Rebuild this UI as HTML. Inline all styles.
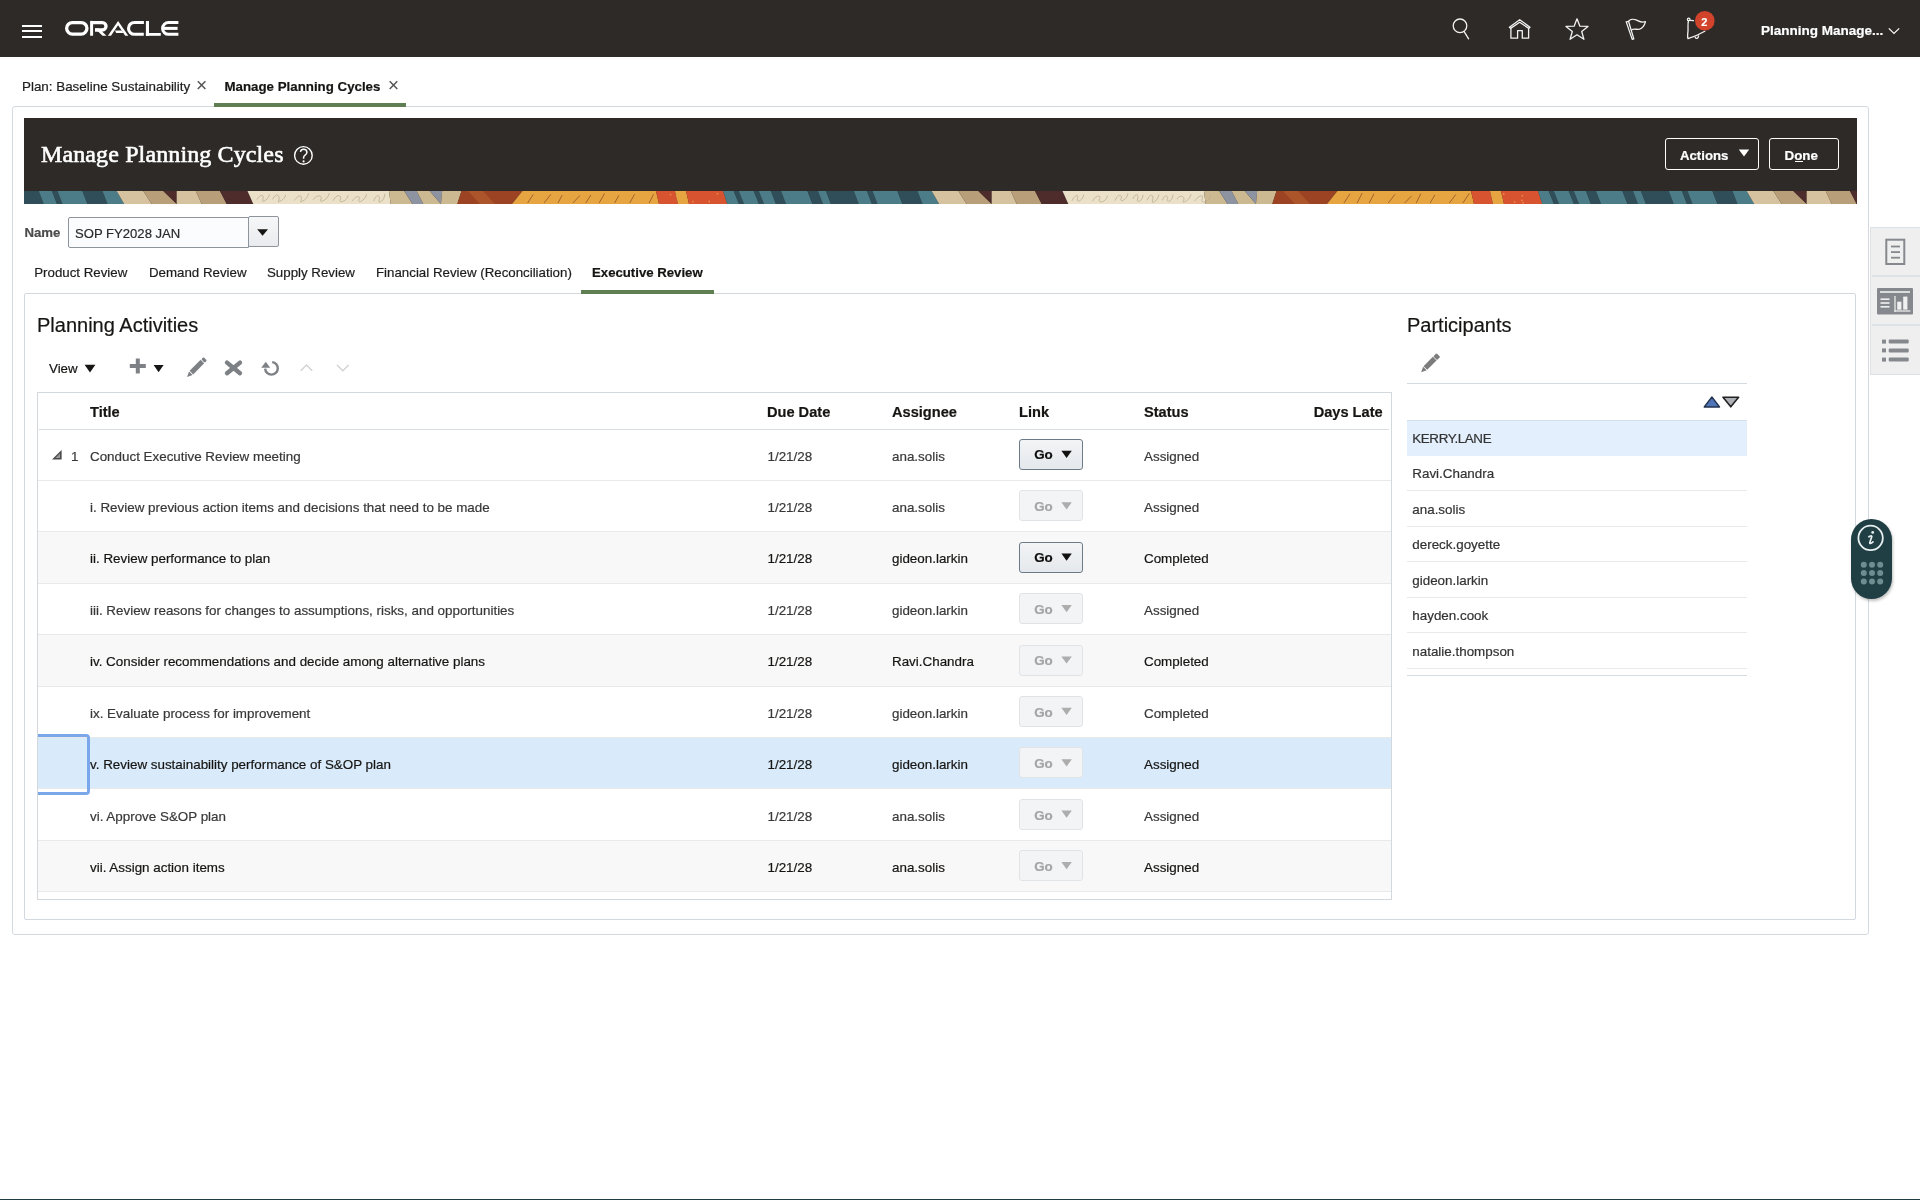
<!DOCTYPE html><html><head><meta charset="utf-8"><style>
*{margin:0;padding:0;box-sizing:border-box}
html,body{width:1920px;height:1200px;overflow:hidden;background:#fff;font-family:"Liberation Sans",sans-serif}
#root{position:absolute;left:0;top:0;width:1920px;height:1200px;will-change:transform}
.t{position:absolute;white-space:nowrap;line-height:1;-webkit-text-stroke-width:0.2px}
.a{position:absolute}
svg{position:absolute;left:0;top:0;overflow:visible}
</style></head><body><div id="root">
<div class="a" style="left:0px;top:0px;width:1920px;height:57px;background:#2e2a27"></div>
<div class="a" style="left:22px;top:24.5px;width:20px;height:2px;background:#fff"></div>
<div class="a" style="left:22px;top:30px;width:20px;height:2px;background:#fff"></div>
<div class="a" style="left:22px;top:35.5px;width:20px;height:2px;background:#fff"></div>
<svg width="1920" height="57" style="left:0;top:0">
<g fill="none" stroke="#fff" stroke-width="3.3">
<rect x="66.65" y="22.55" width="20.3" height="11.55" rx="5.78"/>
<path d="M91.6 22.55 H102.3 A3.72 3.72 0 0 1 102.3 30 H95"/>
</g>
<g fill="none" stroke="#fff" stroke-width="3.1">
<path d="M143.9 22.5 H134.4 A5.87 5.87 0 0 0 134.4 34.25 H143.8"/>
<path d="M178.4 22.5 H168.5 A5.88 5.88 0 0 0 168.5 34.3 H178.4"/>
</g>
<g fill="#fff">
<rect x="90.1" y="20.9" width="3" height="14.85"/>
<path d="M95 28.4 L98.9 28.4 L106.5 35.75 L102.5 35.75 Z"/>
<path fill-rule="evenodd" d="M118.1 20.9 L128.3 35.75 L107.9 35.75 Z M118.1 25.3 L125.2 35.75 L111.0 35.75 Z"/>
<path d="M115.0 30.5 L121.8 30.5 L123.4 32.9 L116.2 32.9 Z"/>
<rect x="145.9" y="21" width="3.1" height="14.8"/>
<rect x="145.9" y="33" width="14.9" height="2.8"/>
<rect x="163.8" y="26.85" width="13.8" height="3.05"/>
</g>
</svg>
<svg width="1920" height="57" style="left:0;top:0">
<g fill="none" stroke="#f2f2f2" stroke-width="1.3" stroke-linejoin="round" stroke-linecap="round">
<circle cx="1460" cy="25.8" r="6.8"/>
<path d="M1464 31.4 L1468.6 38.8"/>
<path d="M1509.4 27.2 L1519.7 19.7 L1530 27.2 L1528.8 28.4 L1519.7 22.3 L1510.6 28.4 Z"/>
<path d="M1510.9 28.6 V38.2 H1517.6 V30.6 H1522.3 V38.2 H1528.6 V28.6"/>
<path d="M1577 18.8 L1579.9 26.2 L1588 26.4 L1581.7 31.5 L1583.9 39.3 L1577 34.8 L1570.1 39.3 L1572.3 31.5 L1566 26.4 L1574.1 26.2 Z"/>
<path d="M1626.2 21.9 L1628.5 21.3 L1633.8 38.9 L1632.2 39.4 Z"/>
<path d="M1628.5 21.3 C1630 19.2 1633.5 18.9 1636 19.8 C1638.5 20.8 1641 23.2 1645.5 21.6 C1644.6 25 1643 28.2 1639.5 29.2 C1637 29.8 1634.2 28.3 1631.6 29.8"/>
<circle cx="1688.7" cy="19.4" r="1.3"/>
<path d="M1688.4 21 C1687.6 24 1688.2 28 1688 31 C1687.8 34 1687 36.5 1688 38.6 C1693 37 1700 34 1704.8 31.2"/>
<path d="M1695.2 37.2 C1696 39.2 1698.4 38.8 1698.6 35.8"/>
<path d="M1690 20.4 L1693.5 20.6"/>
</g>
<circle cx="1704.8" cy="20.7" r="9.8" fill="#d2432b"/>
</svg>
<div class="t" style="left:1701.3px;top:16.69px;font-size:11px;font-weight:700;color:#fff;font-family:'Liberation Sans';">2</div>
<div class="t" style="left:1761px;top:24.07px;font-size:13.5px;font-weight:700;color:#fff;font-family:'Liberation Sans';">Planning Manage...</div>
<svg width="1920" height="57"><path d="M1888.8 28.3 L1894 33.5 L1899.2 28.3" fill="none" stroke="#fff" stroke-width="1.2"/></svg>
<div class="t" style="left:22px;top:79.66px;font-size:13.4px;font-weight:400;color:#1d1d1d;font-family:'Liberation Sans';">Plan: Baseline Sustainability</div>
<div class="t" style="left:224.5px;top:79.74px;font-size:13.3px;font-weight:700;color:#161513;font-family:'Liberation Sans';">Manage Planning Cycles</div>
<svg width="1920" height="120"><g stroke="#555" stroke-width="1.5">
<path d="M197.8 81.3 L205.4 89 M205.4 81.3 L197.8 89"/>
<path d="M389.7 81.3 L397.3 89 M397.3 81.3 L389.7 89"/></g></svg>
<div class="a" style="left:12px;top:106px;width:1857px;height:829px;border:1px solid #d3d9df;border-radius:3px"></div>
<div class="a" style="left:214px;top:103px;width:192px;height:4px;background:#5f7e51"></div>
<div class="a" style="left:24px;top:118px;width:1833px;height:86px;background:#2e2a27"></div>
<div class="t" style="left:41px;top:141.90px;font-size:24px;font-weight:400;color:#fff;font-family:'Liberation Serif';letter-spacing:0.12px;-webkit-text-stroke:0.6px #fff">Manage Planning Cycles</div>
<svg width="1920" height="220"><circle cx="303.4" cy="155.4" r="8.8" fill="none" stroke="#fff" stroke-width="1.4"/><path d="M300.4 151.8 C300.8 150 302.2 149.3 303.6 149.3 C305.6 149.3 306.9 150.6 306.9 152.4 C306.9 154.6 303.7 155.4 303.6 157.4 V158.8" fill="none" stroke="#fff" stroke-width="1.5"/><circle cx="303.6" cy="161.4" r="1.05" fill="#fff"/></svg>
<div class="a" style="left:1665px;top:138px;width:94px;height:32px;border:1.6px solid #fff;border-radius:3px"></div>
<div class="t" style="left:1680px;top:148.83px;font-size:13.2px;font-weight:700;color:#fff;font-family:'Liberation Sans';">Actions</div>
<svg width="1920" height="220"><path d="M1738.8 149.4 H1749.2 L1744 156.6 Z" fill="#fff"/></svg>
<div class="a" style="left:1769px;top:138px;width:70px;height:32px;border:1.6px solid #fff;border-radius:3px"></div>
<div class="t" style="left:1784.5px;top:148.66px;font-size:13.4px;font-weight:700;color:#fff;font-family:'Liberation Sans';">Done</div>
<div class="a" style="left:1795px;top:161px;width:8px;height:1px;background:#fff"></div>
<svg width="1920" height="220"><defs><clipPath id="bc"><rect x="24" y="191" width="1833" height="13"/></clipPath></defs><g clip-path="url(#bc)"><path d="M-91.90 191 L-81.25 191 L-76.00 204 L-87.80 204Z" fill="#4b7c88"/><path d="M-81.25 191 L-76.25 191 L-71.00 204 L-76.00 204Z" fill="#2f4e59"/><path d="M-76.25 191 L-61.25 191 L-56.00 204 L-71.00 204Z" fill="#4b7c88"/><path d="M-61.25 191 L-56.25 191 L-51.00 204 L-56.00 204Z" fill="#2f4e59"/><path d="M-56.25 191 L-44.00 191 L-39.00 204 L-51.00 204Z" fill="#4b7c88"/><path d="M-44.00 191 L-34.00 191 L-29.00 204 L-39.00 204Z" fill="#2f4e59"/><path d="M-34.00 191 L-7.50 191 L-2.50 204 L-29.00 204Z" fill="#4b7c88"/><path d="M-7.50 191 L3.00 191 L8.00 204 L-2.50 204Z" fill="#2f4e59"/><path d="M3.00 191 L11.00 191 L16.00 204 L8.00 204Z" fill="#4b7c88"/><path d="M11.00 191 L38.75 191 L43.75 204 L16.00 204Z" fill="#2f4e59"/><path d="M38.75 191 L52.00 191 L57.00 204 L43.75 204Z" fill="#4b7c88"/><path d="M52.00 191 L57.50 191 L62.50 204 L57.00 204Z" fill="#2f4e59"/><path d="M57.50 191 L82.50 191 L87.50 204 L62.50 204Z" fill="#4b7c88"/><path d="M82.50 191 L102.50 191 L107.50 204 L87.50 204Z" fill="#2f4e59"/><path d="M102.50 191 L116.70 191 L124.20 204 L107.50 204Z" fill="#4b7c88"/><path d="M116.70 191 L143.30 191 L151.70 204 L124.20 204Z" fill="#d6c29e"/><path d="M143.30 191 L163.30 191 L176.70 204 L151.70 204Z" fill="#b89f7a"/><path d="M163.30 191 L176.70 191 L176.70 204 L176.70 204Z" fill="#4e2c2b"/><path d="M176.70 191 L195.80 191 L201.70 204 L176.70 204Z" fill="#d6c29e"/><path d="M195.80 191 L220.00 191 L226.70 204 L201.70 204Z" fill="#b89f7a"/><path d="M220.00 191 L247.50 191 L253.30 204 L226.70 204Z" fill="#4e2c2b"/><path d="M247.50 191 L389.00 191 L390.60 204 L253.30 204Z" fill="#ebe1c8"/><path d="M389.00 191 L404.20 191 L412.50 204 L390.60 204Z" fill="#cdb991"/><path d="M404.20 191 L416.70 191 L423.40 204 L412.50 204Z" fill="#8d93a0"/><path d="M416.70 191 L429.70 191 L441.00 204 L423.40 204Z" fill="#cdb991"/><path d="M429.70 191 L442.20 191 L441.00 204 L441.00 204Z" fill="#8d93a0"/><path d="M442.20 191 L461.50 191 L457.30 204 L441.00 204Z" fill="#cdb991"/><path d="M461.50 191 L522.50 191 L512.00 204 L457.30 204Z" fill="#9b4322"/><path d="M522.50 191 L656.00 191 L659.00 204 L512.00 204Z" fill="#e6a540"/><path d="M656.00 191 L675.00 191 L678.00 204 L659.00 204Z" fill="#d8532f"/><path d="M675.00 191 L686.00 191 L689.00 204 L678.00 204Z" fill="#e6a540"/><path d="M686.00 191 L723.10 191 L727.20 204 L689.00 204Z" fill="#d8532f"/><path d="M723.10 191 L733.75 191 L739.00 204 L727.20 204Z" fill="#4b7c88"/><path d="M733.75 191 L738.75 191 L744.00 204 L739.00 204Z" fill="#2f4e59"/><path d="M738.75 191 L753.75 191 L759.00 204 L744.00 204Z" fill="#4b7c88"/><path d="M753.75 191 L758.75 191 L764.00 204 L759.00 204Z" fill="#2f4e59"/><path d="M758.75 191 L771.00 191 L776.00 204 L764.00 204Z" fill="#4b7c88"/><path d="M771.00 191 L781.00 191 L786.00 204 L776.00 204Z" fill="#2f4e59"/><path d="M781.00 191 L807.50 191 L812.50 204 L786.00 204Z" fill="#4b7c88"/><path d="M807.50 191 L818.00 191 L823.00 204 L812.50 204Z" fill="#2f4e59"/><path d="M818.00 191 L826.00 191 L831.00 204 L823.00 204Z" fill="#4b7c88"/><path d="M826.00 191 L853.75 191 L858.75 204 L831.00 204Z" fill="#2f4e59"/><path d="M853.75 191 L867.00 191 L872.00 204 L858.75 204Z" fill="#4b7c88"/><path d="M867.00 191 L872.50 191 L877.50 204 L872.00 204Z" fill="#2f4e59"/><path d="M872.50 191 L897.50 191 L902.50 204 L877.50 204Z" fill="#4b7c88"/><path d="M897.50 191 L917.50 191 L922.50 204 L902.50 204Z" fill="#2f4e59"/><path d="M917.50 191 L931.70 191 L939.20 204 L922.50 204Z" fill="#4b7c88"/><path d="M931.70 191 L958.30 191 L966.70 204 L939.20 204Z" fill="#d6c29e"/><path d="M958.30 191 L978.30 191 L991.70 204 L966.70 204Z" fill="#b89f7a"/><path d="M978.30 191 L991.70 191 L991.70 204 L991.70 204Z" fill="#4e2c2b"/><path d="M991.70 191 L1010.80 191 L1016.70 204 L991.70 204Z" fill="#d6c29e"/><path d="M1010.80 191 L1035.00 191 L1041.70 204 L1016.70 204Z" fill="#b89f7a"/><path d="M1035.00 191 L1062.50 191 L1068.30 204 L1041.70 204Z" fill="#4e2c2b"/><path d="M1062.50 191 L1204.00 191 L1205.60 204 L1068.30 204Z" fill="#ebe1c8"/><path d="M1204.00 191 L1219.20 191 L1227.50 204 L1205.60 204Z" fill="#cdb991"/><path d="M1219.20 191 L1231.70 191 L1238.40 204 L1227.50 204Z" fill="#8d93a0"/><path d="M1231.70 191 L1244.70 191 L1256.00 204 L1238.40 204Z" fill="#cdb991"/><path d="M1244.70 191 L1257.20 191 L1256.00 204 L1256.00 204Z" fill="#8d93a0"/><path d="M1257.20 191 L1276.50 191 L1272.30 204 L1256.00 204Z" fill="#cdb991"/><path d="M1276.50 191 L1337.50 191 L1327.00 204 L1272.30 204Z" fill="#9b4322"/><path d="M1337.50 191 L1471.00 191 L1474.00 204 L1327.00 204Z" fill="#e6a540"/><path d="M1471.00 191 L1490.00 191 L1493.00 204 L1474.00 204Z" fill="#d8532f"/><path d="M1490.00 191 L1501.00 191 L1504.00 204 L1493.00 204Z" fill="#e6a540"/><path d="M1501.00 191 L1538.10 191 L1542.20 204 L1504.00 204Z" fill="#d8532f"/><path d="M1538.10 191 L1548.75 191 L1554.00 204 L1542.20 204Z" fill="#4b7c88"/><path d="M1548.75 191 L1553.75 191 L1559.00 204 L1554.00 204Z" fill="#2f4e59"/><path d="M1553.75 191 L1568.75 191 L1574.00 204 L1559.00 204Z" fill="#4b7c88"/><path d="M1568.75 191 L1573.75 191 L1579.00 204 L1574.00 204Z" fill="#2f4e59"/><path d="M1573.75 191 L1586.00 191 L1591.00 204 L1579.00 204Z" fill="#4b7c88"/><path d="M1586.00 191 L1596.00 191 L1601.00 204 L1591.00 204Z" fill="#2f4e59"/><path d="M1596.00 191 L1622.50 191 L1627.50 204 L1601.00 204Z" fill="#4b7c88"/><path d="M1622.50 191 L1633.00 191 L1638.00 204 L1627.50 204Z" fill="#2f4e59"/><path d="M1633.00 191 L1641.00 191 L1646.00 204 L1638.00 204Z" fill="#4b7c88"/><path d="M1641.00 191 L1668.75 191 L1673.75 204 L1646.00 204Z" fill="#2f4e59"/><path d="M1668.75 191 L1682.00 191 L1687.00 204 L1673.75 204Z" fill="#4b7c88"/><path d="M1682.00 191 L1687.50 191 L1692.50 204 L1687.00 204Z" fill="#2f4e59"/><path d="M1687.50 191 L1712.50 191 L1717.50 204 L1692.50 204Z" fill="#4b7c88"/><path d="M1712.50 191 L1732.50 191 L1737.50 204 L1717.50 204Z" fill="#2f4e59"/><path d="M1732.50 191 L1746.70 191 L1754.20 204 L1737.50 204Z" fill="#4b7c88"/><path d="M1746.70 191 L1773.30 191 L1781.70 204 L1754.20 204Z" fill="#d6c29e"/><path d="M1773.30 191 L1793.30 191 L1806.70 204 L1781.70 204Z" fill="#b89f7a"/><path d="M1793.30 191 L1806.70 191 L1806.70 204 L1806.70 204Z" fill="#4e2c2b"/><path d="M1806.70 191 L1825.80 191 L1831.70 204 L1806.70 204Z" fill="#d6c29e"/><path d="M1825.80 191 L1850.00 191 L1856.70 204 L1831.70 204Z" fill="#b89f7a"/><path d="M1850.00 191 L1877.50 191 L1883.30 204 L1856.70 204Z" fill="#4e2c2b"/><path d="M1877.50 191 L2019.00 191 L2020.60 204 L1883.30 204Z" fill="#ebe1c8"/><path d="M2019.00 191 L2034.20 191 L2042.50 204 L2020.60 204Z" fill="#cdb991"/><path d="M2034.20 191 L2046.70 191 L2053.40 204 L2042.50 204Z" fill="#8d93a0"/><path d="M2046.70 191 L2059.70 191 L2071.00 204 L2053.40 204Z" fill="#cdb991"/><path d="M2059.70 191 L2072.20 191 L2071.00 204 L2071.00 204Z" fill="#8d93a0"/><path d="M2072.20 191 L2091.50 191 L2087.30 204 L2071.00 204Z" fill="#cdb991"/><path d="M2091.50 191 L2152.50 191 L2142.00 204 L2087.30 204Z" fill="#9b4322"/><path d="M2152.50 191 L2286.00 191 L2289.00 204 L2142.00 204Z" fill="#e6a540"/><path d="M2286.00 191 L2305.00 191 L2308.00 204 L2289.00 204Z" fill="#d8532f"/><path d="M2305.00 191 L2316.00 191 L2319.00 204 L2308.00 204Z" fill="#e6a540"/><path d="M2316.00 191 L2353.10 191 L2357.20 204 L2319.00 204Z" fill="#d8532f"/></g><g clip-path="url(#bc)"><path d="M468 191 L483 191 L495 204 L480 204Z" fill="#b45c2f" opacity="0.7"/><path d="M257.0 199.6 C260.4 194.0 264.9 193.3 262.6 200.6 C261.5 202.7 268.3 200.2 269.4 194.5" fill="none" stroke="#b8aa8c" stroke-width="0.9" opacity="0.85"/><path d="M272.5 199.3 C276.1 192.3 280.9 194.7 278.5 201.5 C277.3 202.2 284.5 200.7 285.7 194.9" fill="none" stroke="#b8aa8c" stroke-width="0.9" opacity="0.85"/><path d="M294.2 200.6 C298.1 194.9 303.3 193.2 300.7 201.6 C299.4 202.6 307.3 200.4 308.6 193.4" fill="none" stroke="#b8aa8c" stroke-width="0.9" opacity="0.85"/><path d="M313.1 199.7 C317.5 193.7 323.4 195.6 320.5 200.1 C319.0 203.1 327.8 200.2 329.3 193.2" fill="none" stroke="#b8aa8c" stroke-width="0.9" opacity="0.85"/><path d="M333.1 200.7 C337.2 192.9 342.7 195.3 339.9 200.4 C338.6 202.6 346.8 202.4 348.2 195.1" fill="none" stroke="#b8aa8c" stroke-width="0.9" opacity="0.85"/><path d="M352.3 201.1 C356.2 194.6 361.4 195.9 358.8 199.9 C357.5 204.0 365.3 200.4 366.6 194.3" fill="none" stroke="#b8aa8c" stroke-width="0.9" opacity="0.85"/><path d="M373.8 201.0 C376.9 192.1 380.9 195.7 378.9 201.3 C377.9 203.1 383.9 202.6 384.9 193.9" fill="none" stroke="#b8aa8c" stroke-width="0.9" opacity="0.85"/><path d="M527.6 203 L533.3 194.4" fill="none" stroke="#94582a" stroke-width="1" opacity="0.85"/><path d="M544.0 203 L550.9 194.4" fill="none" stroke="#94582a" stroke-width="1" opacity="0.85"/><path d="M558.0 203 L562.2 195.1" fill="none" stroke="#94582a" stroke-width="1" opacity="0.85"/><path d="M572.9 203 L579.9 195.5" fill="none" stroke="#94582a" stroke-width="1" opacity="0.85"/><path d="M585.7 203 L590.9 195.0" fill="none" stroke="#94582a" stroke-width="1" opacity="0.85"/><path d="M599.1 203 L604.5 193.5" fill="none" stroke="#94582a" stroke-width="1" opacity="0.85"/><path d="M614.7 203 L618.9 195.3" fill="none" stroke="#94582a" stroke-width="1" opacity="0.85"/><path d="M629.8 203 L634.5 194.2" fill="none" stroke="#94582a" stroke-width="1" opacity="0.85"/><path d="M649.2 203 L653.5 194.3" fill="none" stroke="#94582a" stroke-width="1" opacity="0.85"/><circle cx="693.0" cy="201.7" r="0.9" fill="#f0a050" opacity="0.7"/><circle cx="709.2" cy="201.5" r="0.9" fill="#f0a050" opacity="0.7"/><circle cx="676.7" cy="196.6" r="0.9" fill="#f0a050" opacity="0.7"/><circle cx="681.5" cy="201.7" r="0.9" fill="#f0a050" opacity="0.7"/><circle cx="717.5" cy="193.7" r="0.9" fill="#f0a050" opacity="0.7"/><circle cx="670.6" cy="194.6" r="0.9" fill="#f0a050" opacity="0.7"/><path d="M1283 191 L1298 191 L1310 204 L1295 204Z" fill="#b45c2f" opacity="0.7"/><path d="M1072.0 200.9 C1075.2 193.8 1079.4 194.1 1077.3 199.0 C1076.3 202.8 1082.6 201.1 1083.7 194.7" fill="none" stroke="#b8aa8c" stroke-width="0.9" opacity="0.85"/><path d="M1092.4 201.1 C1096.5 193.9 1102.0 195.7 1099.3 199.2 C1097.9 203.8 1106.2 202.3 1107.6 195.6" fill="none" stroke="#b8aa8c" stroke-width="0.9" opacity="0.85"/><path d="M1115.0 200.6 C1118.5 192.3 1123.2 195.5 1120.8 199.2 C1119.7 202.1 1126.7 200.6 1127.9 193.5" fill="none" stroke="#b8aa8c" stroke-width="0.9" opacity="0.85"/><path d="M1132.8 199.0 C1135.6 192.5 1139.3 193.4 1137.4 200.1 C1136.5 202.1 1142.1 202.6 1143.1 194.8" fill="none" stroke="#b8aa8c" stroke-width="0.9" opacity="0.85"/><path d="M1147.0 200.4 C1150.2 193.1 1154.6 193.5 1152.4 201.5 C1151.3 204.0 1157.8 201.4 1158.9 194.5" fill="none" stroke="#b8aa8c" stroke-width="0.9" opacity="0.85"/><path d="M1162.3 200.4 C1165.2 192.8 1169.1 196.3 1167.2 199.5 C1166.2 202.0 1172.0 202.9 1173.0 194.6" fill="none" stroke="#b8aa8c" stroke-width="0.9" opacity="0.85"/><path d="M1176.9 199.1 C1180.7 193.6 1185.9 196.9 1183.3 201.6 C1182.0 203.4 1189.7 200.8 1191.0 194.1" fill="none" stroke="#b8aa8c" stroke-width="0.9" opacity="0.85"/><path d="M1194.7 201.1 C1199.0 194.3 1204.8 194.3 1201.9 199.7 C1200.5 203.6 1209.1 203.0 1210.5 195.6" fill="none" stroke="#b8aa8c" stroke-width="0.9" opacity="0.85"/><path d="M1343.9 203 L1350.1 193.7" fill="none" stroke="#94582a" stroke-width="1" opacity="0.85"/><path d="M1357.1 203 L1362.2 193.1" fill="none" stroke="#94582a" stroke-width="1" opacity="0.85"/><path d="M1369.2 203 L1374.0 193.8" fill="none" stroke="#94582a" stroke-width="1" opacity="0.85"/><path d="M1388.2 203 L1395.0 194.3" fill="none" stroke="#94582a" stroke-width="1" opacity="0.85"/><path d="M1404.6 203 L1411.6 195.9" fill="none" stroke="#94582a" stroke-width="1" opacity="0.85"/><path d="M1416.2 203 L1420.8 193.7" fill="none" stroke="#94582a" stroke-width="1" opacity="0.85"/><path d="M1430.2 203 L1434.8 194.9" fill="none" stroke="#94582a" stroke-width="1" opacity="0.85"/><path d="M1449.4 203 L1455.9 194.4" fill="none" stroke="#94582a" stroke-width="1" opacity="0.85"/><path d="M1462.9 203 L1469.3 193.3" fill="none" stroke="#94582a" stroke-width="1" opacity="0.85"/><circle cx="1514.6" cy="202.0" r="0.9" fill="#f0a050" opacity="0.7"/><circle cx="1521.9" cy="200.3" r="0.9" fill="#f0a050" opacity="0.7"/><circle cx="1503.7" cy="194.0" r="0.9" fill="#f0a050" opacity="0.7"/><circle cx="1522.3" cy="195.7" r="0.9" fill="#f0a050" opacity="0.7"/><circle cx="1523.0" cy="202.7" r="0.9" fill="#f0a050" opacity="0.7"/><circle cx="1498.8" cy="196.4" r="0.9" fill="#f0a050" opacity="0.7"/><path d="M2098 191 L2113 191 L2125 204 L2110 204Z" fill="#b45c2f" opacity="0.7"/><path d="M1887.0 201.9 C1891.7 192.5 1897.9 193.5 1894.8 199.5 C1893.3 203.8 1902.6 202.4 1904.2 193.4" fill="none" stroke="#b8aa8c" stroke-width="0.9" opacity="0.85"/><path d="M1911.6 201.6 C1916.3 193.1 1922.7 195.2 1919.5 199.4 C1917.9 202.0 1927.4 202.9 1929.0 194.9" fill="none" stroke="#b8aa8c" stroke-width="0.9" opacity="0.85"/><path d="M1934.6 200.7 C1939.3 194.6 1945.5 196.3 1942.4 199.6 C1940.8 202.5 1950.1 200.9 1951.7 193.7" fill="none" stroke="#b8aa8c" stroke-width="0.9" opacity="0.85"/><path d="M1957.7 200.7 C1960.9 192.4 1965.2 196.6 1963.1 200.1 C1962.0 202.9 1968.5 201.8 1969.6 195.7" fill="none" stroke="#b8aa8c" stroke-width="0.9" opacity="0.85"/><path d="M1975.0 201.0 C1979.6 193.6 1985.8 195.1 1982.7 199.1 C1981.2 202.9 1990.4 200.5 1992.0 193.0" fill="none" stroke="#b8aa8c" stroke-width="0.9" opacity="0.85"/><path d="M1999.2 200.9 C2002.3 194.2 2006.4 195.2 2004.3 200.0 C2003.3 203.0 2009.4 201.7 2010.4 195.4" fill="none" stroke="#b8aa8c" stroke-width="0.9" opacity="0.85"/><path d="M2157.4 203 L2162.1 193.8" fill="none" stroke="#94582a" stroke-width="1" opacity="0.85"/><path d="M2173.6 203 L2179.2 194.7" fill="none" stroke="#94582a" stroke-width="1" opacity="0.85"/><path d="M2188.6 203 L2195.3 194.3" fill="none" stroke="#94582a" stroke-width="1" opacity="0.85"/><path d="M2202.7 203 L2208.2 194.5" fill="none" stroke="#94582a" stroke-width="1" opacity="0.85"/><path d="M2218.2 203 L2223.5 194.6" fill="none" stroke="#94582a" stroke-width="1" opacity="0.85"/><path d="M2231.9 203 L2238.7 195.1" fill="none" stroke="#94582a" stroke-width="1" opacity="0.85"/><path d="M2249.3 203 L2256.1 193.8" fill="none" stroke="#94582a" stroke-width="1" opacity="0.85"/><path d="M2262.4 203 L2269.2 195.5" fill="none" stroke="#94582a" stroke-width="1" opacity="0.85"/><path d="M2274.8 203 L2279.2 194.3" fill="none" stroke="#94582a" stroke-width="1" opacity="0.85"/><circle cx="2294.4" cy="194.6" r="0.9" fill="#f0a050" opacity="0.7"/><circle cx="2294.4" cy="199.4" r="0.9" fill="#f0a050" opacity="0.7"/><circle cx="2337.0" cy="201.9" r="0.9" fill="#f0a050" opacity="0.7"/><circle cx="2299.3" cy="199.9" r="0.9" fill="#f0a050" opacity="0.7"/><circle cx="2329.6" cy="193.6" r="0.9" fill="#f0a050" opacity="0.7"/><circle cx="2343.0" cy="202.6" r="0.9" fill="#f0a050" opacity="0.7"/></g></svg>
<div class="t" style="left:24.5px;top:226.03px;font-size:13.2px;font-weight:700;color:#4b4b4b;font-family:'Liberation Sans';">Name</div>
<div class="a" style="left:68px;top:217px;width:181px;height:31px;border:1px solid #8d949c;border-radius:2px 0 0 2px;background:#fbfcfd"></div>
<div class="t" style="left:75px;top:226.71px;font-size:13.1px;font-weight:400;color:#2a2a2a;font-family:'Liberation Sans';">SOP FY2028 JAN</div>
<div class="a" style="left:247.5px;top:215.5px;width:31px;height:31px;border:1px solid #8d949c;border-radius:2px;background:linear-gradient(#f6f7f8,#e9ebee)"></div>
<svg width="1920" height="300"><path d="M257.2 229.2 H268 L262.6 235.8 Z" fill="#161513"/></svg>
<div class="t" style="left:34.2px;top:265.74px;font-size:13.3px;font-weight:400;color:#1d1d1d;font-family:'Liberation Sans';">Product Review</div>
<div class="t" style="left:149px;top:265.74px;font-size:13.3px;font-weight:400;color:#1d1d1d;font-family:'Liberation Sans';">Demand Review</div>
<div class="t" style="left:267px;top:265.74px;font-size:13.3px;font-weight:400;color:#1d1d1d;font-family:'Liberation Sans';">Supply Review</div>
<div class="t" style="left:376px;top:265.74px;font-size:13.3px;font-weight:400;color:#1d1d1d;font-family:'Liberation Sans';">Financial Review (Reconciliation)</div>
<div class="t" style="left:592px;top:265.83px;font-size:13.2px;font-weight:700;color:#161513;font-family:'Liberation Sans';">Executive Review</div>
<div class="a" style="left:24px;top:293px;width:1832px;height:627px;border:1px solid #d3d9df;border-radius:2px"></div>
<div class="a" style="left:581px;top:289.5px;width:133px;height:4px;background:#5f7e51"></div>
<div class="t" style="left:37px;top:315.07px;font-size:20px;font-weight:400;color:#161513;font-family:'Liberation Sans';">Planning Activities</div>
<div class="t" style="left:49px;top:361.54px;font-size:13.3px;font-weight:400;color:#161513;font-family:'Liberation Sans';">View</div>
<svg width="1920" height="400"><g fill="#161513">
<path d="M84.6 364.8 H95.4 L90 372.4 Z"/><path d="M153.6 365 H163.6 L158.6 372.2 Z"/></g>
<g fill="#7d8084">
<path d="M135.8 358.6 H139.8 V364.1 H145.8 V368.1 H139.8 V373.6 H135.8 V368.1 H129.8 V364.1 H135.8 Z"/>
<g transform="translate(187,377) rotate(-45)"><path d="M0 0 L5.4 -2.5 L5.4 2.5 Z"/><rect x="6.2" y="-2.5" width="15.6" height="5"/><rect x="22.6" y="-2.5" width="3.2" height="5" rx="1.2"/></g>
</g>
<g stroke="#7d8084" stroke-width="4.4" stroke-linecap="round" fill="none">
<path d="M227 362.6 L240 373.2 M240 362.6 L227 373.2"/>
</g>
<g stroke="#7d8084" stroke-width="2.4" fill="none">
<path d="M272.2 362.1 A6.3 6.3 0 1 1 265.2 368.6"/>
</g>
<path d="M261.2 367.8 L270.2 367.8 L265.8 361.8 Z" fill="#7d8084"/>
<g stroke="#d2d2d2" stroke-width="1.4" fill="none">
<path d="M300.8 370.8 L306.5 365 L312.2 370.8"/>
<path d="M337 365 L342.8 370.8 L348.6 365"/>
</g></svg>
<div class="a" style="left:37px;top:392px;width:1355px;height:508px;border:1px solid #d3d8dd"></div>
<div class="a" style="left:38.5px;top:429px;width:1350px;height:1px;background:#d8dde3"></div>
<div class="t" style="left:90px;top:404.64px;font-size:14.6px;font-weight:700;color:#161513;font-family:'Liberation Sans';">Title</div>
<div class="t" style="left:767px;top:404.64px;font-size:14.6px;font-weight:700;color:#161513;font-family:'Liberation Sans';">Due Date</div>
<div class="t" style="left:892px;top:404.64px;font-size:14.6px;font-weight:700;color:#161513;font-family:'Liberation Sans';">Assignee</div>
<div class="t" style="left:1019px;top:404.64px;font-size:14.6px;font-weight:700;color:#161513;font-family:'Liberation Sans';">Link</div>
<div class="t" style="left:1144px;top:404.64px;font-size:14.6px;font-weight:700;color:#161513;font-family:'Liberation Sans';">Status</div>
<div class="t" style="right:537.4000000000001px;top:404.64px;font-size:14.6px;font-weight:700;color:#161513">Days Late</div>
<div class="a" style="left:38px;top:480px;width:1353px;height:1px;background:#e9e9e9"></div>
<div class="t" style="left:90px;top:449.56px;font-size:13.4px;font-weight:400;color:#383838;font-family:'Liberation Sans';">Conduct Executive Review meeting</div>
<div class="t" style="left:767.5px;top:449.56px;font-size:13.4px;font-weight:400;color:#383838;font-family:'Liberation Sans';">1/21/28</div>
<div class="t" style="left:892px;top:449.56px;font-size:13.4px;font-weight:400;color:#383838;font-family:'Liberation Sans';">ana.solis</div>
<div class="t" style="left:1144px;top:449.56px;font-size:13.4px;font-weight:400;color:#383838;font-family:'Liberation Sans';">Assigned</div>
<div class="a" style="left:1019px;top:439px;width:64px;height:31px;border:1.4px solid #6d7b89;border-radius:3px;background:linear-gradient(#f2f4f6,#e5e8ec)"></div>
<div class="t" style="left:1034.2px;top:448.46px;font-size:13.4px;font-weight:700;color:#0d0d0d;font-family:'Liberation Sans';">Go</div>
<svg width="1920" height="1000"><path d="M1061.4 450.8 H1071.8 L1066.6 458.0 Z" fill="#111"/></svg>
<svg width="1920" height="1000"><path d="M52 459.6 L61.6 450 V459.6 Z" fill="#4a4a4a"/><path d="M55.5 458 L60 453.5 V458 Z" fill="#9a9a9a"/></svg>
<div class="t" style="left:71px;top:449.56px;font-size:13.4px;font-weight:400;color:#383838;font-family:'Liberation Sans';">1</div>
<div class="a" style="left:38px;top:531px;width:1353px;height:1px;background:#e9e9e9"></div>
<div class="t" style="left:90px;top:501.01px;font-size:13.4px;font-weight:400;color:#383838;font-family:'Liberation Sans';">i. Review previous action items and decisions that need to be made</div>
<div class="t" style="left:767.5px;top:501.01px;font-size:13.4px;font-weight:400;color:#383838;font-family:'Liberation Sans';">1/21/28</div>
<div class="t" style="left:892px;top:501.01px;font-size:13.4px;font-weight:400;color:#383838;font-family:'Liberation Sans';">ana.solis</div>
<div class="t" style="left:1144px;top:501.01px;font-size:13.4px;font-weight:400;color:#383838;font-family:'Liberation Sans';">Assigned</div>
<div class="a" style="left:1019px;top:490px;width:64px;height:31px;border:1px solid #e1e4e7;border-radius:3px;background:#f2f4f6"></div>
<div class="t" style="left:1034.2px;top:499.91px;font-size:13.4px;font-weight:700;color:#a4a4a4;font-family:'Liberation Sans';">Go</div>
<svg width="1920" height="1000"><path d="M1061.4 502.2 H1071.8 L1066.6 509.4 Z" fill="#adadad"/></svg>
<div class="a" style="left:38px;top:532px;width:1353px;height:51px;background:#f8f8f8"></div>
<div class="a" style="left:38px;top:583px;width:1353px;height:1px;background:#e9e9e9"></div>
<div class="t" style="left:90px;top:552.46px;font-size:13.4px;font-weight:400;color:#161513;font-family:'Liberation Sans';">ii. Review performance to plan</div>
<div class="t" style="left:767.5px;top:552.46px;font-size:13.4px;font-weight:400;color:#161513;font-family:'Liberation Sans';">1/21/28</div>
<div class="t" style="left:892px;top:552.46px;font-size:13.4px;font-weight:400;color:#161513;font-family:'Liberation Sans';">gideon.larkin</div>
<div class="t" style="left:1144px;top:552.46px;font-size:13.4px;font-weight:400;color:#161513;font-family:'Liberation Sans';">Completed</div>
<div class="a" style="left:1019px;top:542px;width:64px;height:31px;border:1.4px solid #6d7b89;border-radius:3px;background:linear-gradient(#f2f4f6,#e5e8ec)"></div>
<div class="t" style="left:1034.2px;top:551.36px;font-size:13.4px;font-weight:700;color:#0d0d0d;font-family:'Liberation Sans';">Go</div>
<svg width="1920" height="1000"><path d="M1061.4 553.5999999999999 H1071.8 L1066.6 560.8 Z" fill="#111"/></svg>
<div class="a" style="left:38px;top:634px;width:1353px;height:1px;background:#e9e9e9"></div>
<div class="t" style="left:90px;top:603.91px;font-size:13.4px;font-weight:400;color:#383838;font-family:'Liberation Sans';">iii. Review reasons for changes to assumptions, risks, and opportunities</div>
<div class="t" style="left:767.5px;top:603.91px;font-size:13.4px;font-weight:400;color:#383838;font-family:'Liberation Sans';">1/21/28</div>
<div class="t" style="left:892px;top:603.91px;font-size:13.4px;font-weight:400;color:#383838;font-family:'Liberation Sans';">gideon.larkin</div>
<div class="t" style="left:1144px;top:603.91px;font-size:13.4px;font-weight:400;color:#383838;font-family:'Liberation Sans';">Assigned</div>
<div class="a" style="left:1019px;top:593px;width:64px;height:31px;border:1px solid #e1e4e7;border-radius:3px;background:#f2f4f6"></div>
<div class="t" style="left:1034.2px;top:602.81px;font-size:13.4px;font-weight:700;color:#a4a4a4;font-family:'Liberation Sans';">Go</div>
<svg width="1920" height="1000"><path d="M1061.4 605.0 H1071.8 L1066.6 612.2 Z" fill="#adadad"/></svg>
<div class="a" style="left:38px;top:635px;width:1353px;height:51px;background:#f8f8f8"></div>
<div class="a" style="left:38px;top:686px;width:1353px;height:1px;background:#e9e9e9"></div>
<div class="t" style="left:90px;top:655.36px;font-size:13.4px;font-weight:400;color:#161513;font-family:'Liberation Sans';">iv. Consider recommendations and decide among alternative plans</div>
<div class="t" style="left:767.5px;top:655.36px;font-size:13.4px;font-weight:400;color:#161513;font-family:'Liberation Sans';">1/21/28</div>
<div class="t" style="left:892px;top:655.36px;font-size:13.4px;font-weight:400;color:#161513;font-family:'Liberation Sans';">Ravi.Chandra</div>
<div class="t" style="left:1144px;top:655.36px;font-size:13.4px;font-weight:400;color:#161513;font-family:'Liberation Sans';">Completed</div>
<div class="a" style="left:1019px;top:645px;width:64px;height:31px;border:1px solid #e1e4e7;border-radius:3px;background:#f2f4f6"></div>
<div class="t" style="left:1034.2px;top:654.26px;font-size:13.4px;font-weight:700;color:#a4a4a4;font-family:'Liberation Sans';">Go</div>
<svg width="1920" height="1000"><path d="M1061.4 656.4 H1071.8 L1066.6 663.6 Z" fill="#adadad"/></svg>
<div class="a" style="left:38px;top:737px;width:1353px;height:1px;background:#e9e9e9"></div>
<div class="t" style="left:90px;top:706.81px;font-size:13.4px;font-weight:400;color:#383838;font-family:'Liberation Sans';">ix. Evaluate process for improvement</div>
<div class="t" style="left:767.5px;top:706.81px;font-size:13.4px;font-weight:400;color:#383838;font-family:'Liberation Sans';">1/21/28</div>
<div class="t" style="left:892px;top:706.81px;font-size:13.4px;font-weight:400;color:#383838;font-family:'Liberation Sans';">gideon.larkin</div>
<div class="t" style="left:1144px;top:706.81px;font-size:13.4px;font-weight:400;color:#383838;font-family:'Liberation Sans';">Completed</div>
<div class="a" style="left:1019px;top:696px;width:64px;height:31px;border:1px solid #e1e4e7;border-radius:3px;background:#f2f4f6"></div>
<div class="t" style="left:1034.2px;top:705.71px;font-size:13.4px;font-weight:700;color:#a4a4a4;font-family:'Liberation Sans';">Go</div>
<svg width="1920" height="1000"><path d="M1061.4 707.8 H1071.8 L1066.6 715.0 Z" fill="#adadad"/></svg>
<div class="a" style="left:38px;top:738px;width:1353px;height:50px;background:#d9ebfb"></div>
<div class="a" style="left:38px;top:788px;width:1353px;height:1px;background:#e9e9e9"></div>
<div class="t" style="left:90px;top:758.26px;font-size:13.4px;font-weight:400;color:#161513;font-family:'Liberation Sans';">v. Review sustainability performance of S&amp;OP plan</div>
<div class="t" style="left:767.5px;top:758.26px;font-size:13.4px;font-weight:400;color:#161513;font-family:'Liberation Sans';">1/21/28</div>
<div class="t" style="left:892px;top:758.26px;font-size:13.4px;font-weight:400;color:#161513;font-family:'Liberation Sans';">gideon.larkin</div>
<div class="t" style="left:1144px;top:758.26px;font-size:13.4px;font-weight:400;color:#161513;font-family:'Liberation Sans';">Assigned</div>
<div class="a" style="left:1019px;top:747px;width:64px;height:31px;border:1px solid #e1e4e7;border-radius:3px;background:#f2f4f6"></div>
<div class="t" style="left:1034.2px;top:757.16px;font-size:13.4px;font-weight:700;color:#a4a4a4;font-family:'Liberation Sans';">Go</div>
<svg width="1920" height="1000"><path d="M1061.4 759.1999999999999 H1071.8 L1066.6 766.4 Z" fill="#adadad"/></svg>
<div class="a" style="left:38px;top:840px;width:1353px;height:1px;background:#e9e9e9"></div>
<div class="t" style="left:90px;top:809.71px;font-size:13.4px;font-weight:400;color:#383838;font-family:'Liberation Sans';">vi. Approve S&amp;OP plan</div>
<div class="t" style="left:767.5px;top:809.71px;font-size:13.4px;font-weight:400;color:#383838;font-family:'Liberation Sans';">1/21/28</div>
<div class="t" style="left:892px;top:809.71px;font-size:13.4px;font-weight:400;color:#383838;font-family:'Liberation Sans';">ana.solis</div>
<div class="t" style="left:1144px;top:809.71px;font-size:13.4px;font-weight:400;color:#383838;font-family:'Liberation Sans';">Assigned</div>
<div class="a" style="left:1019px;top:799px;width:64px;height:31px;border:1px solid #e1e4e7;border-radius:3px;background:#f2f4f6"></div>
<div class="t" style="left:1034.2px;top:808.61px;font-size:13.4px;font-weight:700;color:#a4a4a4;font-family:'Liberation Sans';">Go</div>
<svg width="1920" height="1000"><path d="M1061.4 810.5999999999999 H1071.8 L1066.6 817.8 Z" fill="#adadad"/></svg>
<div class="a" style="left:38px;top:841px;width:1353px;height:50px;background:#f8f8f8"></div>
<div class="a" style="left:38px;top:891px;width:1353px;height:1px;background:#e9e9e9"></div>
<div class="t" style="left:90px;top:861.16px;font-size:13.4px;font-weight:400;color:#161513;font-family:'Liberation Sans';">vii. Assign action items</div>
<div class="t" style="left:767.5px;top:861.16px;font-size:13.4px;font-weight:400;color:#161513;font-family:'Liberation Sans';">1/21/28</div>
<div class="t" style="left:892px;top:861.16px;font-size:13.4px;font-weight:400;color:#161513;font-family:'Liberation Sans';">ana.solis</div>
<div class="t" style="left:1144px;top:861.16px;font-size:13.4px;font-weight:400;color:#161513;font-family:'Liberation Sans';">Assigned</div>
<div class="a" style="left:1019px;top:850px;width:64px;height:31px;border:1px solid #e1e4e7;border-radius:3px;background:#f2f4f6"></div>
<div class="t" style="left:1034.2px;top:860.06px;font-size:13.4px;font-weight:700;color:#a4a4a4;font-family:'Liberation Sans';">Go</div>
<svg width="1920" height="1000"><path d="M1061.4 862.0 H1071.8 L1066.6 869.2 Z" fill="#adadad"/></svg>
<div class="a" style="left:37.5px;top:734px;width:52px;height:60.5px;border:3px solid #7aa6ea;border-left:none;border-radius:0 4px 4px 0"></div>
<div class="t" style="left:1407px;top:314.67px;font-size:20px;font-weight:400;color:#161513;font-family:'Liberation Sans';">Participants</div>
<svg width="1920" height="400"><g fill="#7c7c7c" transform="translate(1421.2,372.2) rotate(-45)"><path d="M0 0 L5.2 -2.6 L5.2 2.6 Z"/><rect x="5.9" y="-2.6" width="13.2" height="5.2"/><rect x="19.8" y="-2.6" width="4.4" height="5.2" rx="0.8"/></g></svg>
<div class="a" style="left:1407px;top:383px;width:340px;height:1.2px;background:#d3dae1"></div>
<svg width="1920" height="420">
<path d="M1704.2 407 L1711.9 397 L1719.6 407 Z" fill="#4f74b8" stroke="#22324d" stroke-width="1.3" stroke-linejoin="round"/>
<path d="M1723 397.2 H1738.6 L1730.8 406.8 Z" fill="#adb0b5" stroke="#222" stroke-width="1.6" stroke-linejoin="round"/>
</svg>
<div class="a" style="left:1407px;top:419.5px;width:340px;height:36px;background:#e3effc;border-top:1px solid #d2dfec"></div>
<div class="t" style="left:1412.3px;top:431.66px;font-size:13.4px;font-weight:400;color:#333;font-family:'Liberation Sans';letter-spacing:-0.4px">KERRY.LANE</div>
<div class="t" style="left:1412.3px;top:467.16px;font-size:13.4px;font-weight:400;color:#333;font-family:'Liberation Sans';">Ravi.Chandra</div>
<div class="a" style="left:1407px;top:490px;width:340px;height:1px;background:#e9e9e9"></div>
<div class="t" style="left:1412.3px;top:502.66px;font-size:13.4px;font-weight:400;color:#333;font-family:'Liberation Sans';">ana.solis</div>
<div class="a" style="left:1407px;top:526px;width:340px;height:1px;background:#e9e9e9"></div>
<div class="t" style="left:1412.3px;top:538.16px;font-size:13.4px;font-weight:400;color:#333;font-family:'Liberation Sans';">dereck.goyette</div>
<div class="a" style="left:1407px;top:561px;width:340px;height:1px;background:#e9e9e9"></div>
<div class="t" style="left:1412.3px;top:573.66px;font-size:13.4px;font-weight:400;color:#333;font-family:'Liberation Sans';">gideon.larkin</div>
<div class="a" style="left:1407px;top:597px;width:340px;height:1px;background:#e9e9e9"></div>
<div class="t" style="left:1412.3px;top:609.16px;font-size:13.4px;font-weight:400;color:#333;font-family:'Liberation Sans';">hayden.cook</div>
<div class="a" style="left:1407px;top:632px;width:340px;height:1px;background:#e9e9e9"></div>
<div class="t" style="left:1412.3px;top:644.66px;font-size:13.4px;font-weight:400;color:#333;font-family:'Liberation Sans';">natalie.thompson</div>
<div class="a" style="left:1407px;top:668px;width:340px;height:1px;background:#e9e9e9"></div>
<div class="a" style="left:1407px;top:675px;width:340px;height:1.3px;background:#d3dae1"></div>
<div class="a" style="left:1870px;top:227px;width:50px;height:148px;background:#efefef;border:1.5px solid #dde2e7;border-right:none"></div>
<div class="a" style="left:1871.5px;top:274.5px;width:48.5px;height:2px;background:#dde2e7"></div>
<div class="a" style="left:1871.5px;top:324px;width:48.5px;height:2px;background:#dde2e7"></div>
<svg width="1920" height="400">
<rect x="1886.3" y="239.7" width="18" height="24.3" fill="none" stroke="#85898d" stroke-width="2"/>
<g fill="#85898d"><rect x="1891" y="245.6" width="9" height="1.8"/><rect x="1891" y="251.2" width="9" height="1.8"/><rect x="1891" y="256.8" width="9" height="1.8"/></g>
<rect x="1877" y="288" width="36" height="26.6" rx="1" fill="#85898d"/>
<g fill="#f0f0f0"><rect x="1880" y="291.2" width="30" height="1.6"/>
<rect x="1880.5" y="298.4" width="9" height="1.6"/><rect x="1880.5" y="302.2" width="9" height="1.6"/><rect x="1880.5" y="306" width="9" height="1.6"/>
<rect x="1894.4" y="296" width="1.2" height="16"/><rect x="1894.4" y="310.4" width="16" height="1.2"/>
<rect x="1897.2" y="301.7" width="4.2" height="8"/><rect x="1903.2" y="296.6" width="4.2" height="13"/></g>
<g fill="#85898d">
<rect x="1882" y="339.6" width="4" height="4"/><rect x="1888.7" y="339.6" width="20" height="4" rx="1"/>
<rect x="1882" y="348.4" width="4" height="4"/><rect x="1888.7" y="348.4" width="20" height="4" rx="1"/>
<rect x="1882" y="357.6" width="4" height="4"/><rect x="1888.7" y="357.6" width="20" height="4" rx="1"/>
</g></svg>
<div class="a" style="left:1850.8px;top:518.8px;width:41px;height:80px;background:#1f3f45;border-radius:20.5px;box-shadow:1px 2px 3px rgba(0,0,0,0.25)"></div>
<svg width="1920" height="700">
<circle cx="1870.6" cy="537.9" r="12.2" fill="none" stroke="#e8eff0" stroke-width="1.8"/>
<g fill="#6f8d90">
<circle cx="1863.8" cy="564.8" r="3"/><circle cx="1872" cy="564.8" r="3"/><circle cx="1880.2" cy="564.8" r="3"/>
<circle cx="1863.8" cy="573.1" r="3"/><circle cx="1872" cy="573.1" r="3"/><circle cx="1880.2" cy="573.1" r="3"/>
<circle cx="1863.8" cy="581.4" r="3"/><circle cx="1872" cy="581.4" r="3"/><circle cx="1880.2" cy="581.4" r="3"/>
</g></svg>
<svg width="1920" height="700"><circle cx="1872.7" cy="532.4" r="1.4" fill="#e6eeef"/><path d="M1868.9 536.8 C1870 536 1871.4 535.6 1871.8 536.4 L1869.8 542.4 C1869.4 543.8 1870.9 543.9 1873 541.8" fill="none" stroke="#e6eeef" stroke-width="1.7" stroke-linecap="round" stroke-linejoin="round"/></svg>
<div class="a" style="left:0px;top:1199px;width:1920px;height:1px;background:#1f3f45"></div>
</div></body></html>
